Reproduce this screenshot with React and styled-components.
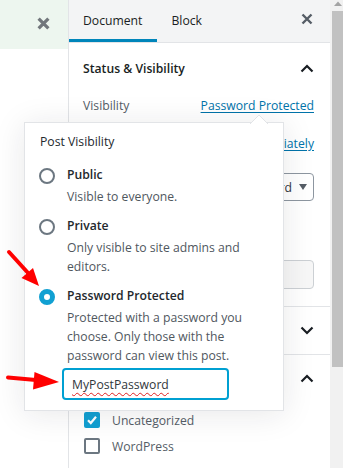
import React from "react";
import styled, { createGlobalStyle } from "styled-components";

const Global = createGlobalStyle`
  html, body { margin: 0; padding: 0; background: #fff; overflow: hidden; }
  body { font-family: "Open Sans", "Noto Sans", sans-serif; font-size: 12.2px; color: #191e23; }
  * { box-sizing: border-box; }
`;

const Page = styled.div`
  position: relative;
  display: flex;
  width: 343px;
  height: 468px;
  overflow: hidden;
`;

const LeftPane = styled.div`
  width: 68px;
  flex: none;
  display: flex;
  flex-direction: column;
`;

const GreenBar = styled.div`
  height: 49px;
  background: #edf6ef;
  display: flex;
  align-items: center;
  justify-content: flex-end;
  padding: 0 18px 2px 0;
`;

const Sidebar = styled.div`
  width: 262px;
  flex: none;
  border-left: 1px solid #e2e4e7;
  display: flex;
  flex-direction: column;
  background: #fff;
`;

const Header = styled.div`
  height: 43px;
  flex: none;
  background: #f3f4f5;
  border-bottom: 1px solid #e2e4e7;
  display: flex;
  align-items: stretch;
  padding-right: 17px;
`;

const Tab = styled.div`
  display: flex;
  align-items: center;
  padding: 0 15px 1px 14px;
  color: #191e23;
  font-size: 12.2px;
  box-shadow: ${(p) => (p.$active ? "inset 0 -3px 0 #0085ba" : "none")};
`;

const HeaderClose = styled.div`
  margin-left: auto;
  display: flex;
  align-items: center;
  padding-bottom: 4px;
`;

const Panel = styled.div`
  border-bottom: 1px solid #e2e4e7;
`;

const PanelHead = styled.div`
  height: ${(p) => p.$h}px;
  display: flex;
  align-items: center;
  justify-content: space-between;
  padding: 0 16px 0 14px;
  font-weight: 600;
  color: #191e23;
`;

const PanelBody = styled.div`
  padding: ${(p) => p.$pt || 0}px 16px ${(p) => p.$pb || 0}px 14px;
  display: flex;
  flex-direction: column;
`;

const Row = styled.div`
  height: ${(p) => p.$h || 24}px;
  margin-top: ${(p) => p.$mt || 0}px;
  display: flex;
  align-items: center;
  justify-content: space-between;
  color: #555d66;
`;

const Link = styled.a`
  color: #0073aa;
  text-decoration: underline;
  text-underline-offset: 2px;
`;

const SelectBox = styled.div`
  width: 80px;
  height: 28px;
  border: 1px solid #8d96a0;
  border-radius: 4px;
  display: flex;
  align-items: center;
  justify-content: space-between;
  padding: 0 6px 0 5px;
  color: #32373c;
`;

const Caret = styled.span`
  width: 0;
  height: 0;
  border-left: 4px solid transparent;
  border-right: 4px solid transparent;
  border-top: 6px solid #555d66;
`;

const GhostButton = styled.div`
  height: 29px;
  margin-top: ${(p) => p.$mt || 0}px;
  border: 1px solid #ccd0d4;
  border-radius: 4px;
  background: #f7f7f7;
  display: flex;
  align-items: center;
  justify-content: center;
  color: #555d66;
`;

const CheckRow = styled.div`
  height: 26px;
  margin-top: ${(p) => p.$mt || 0}px;
  display: flex;
  align-items: center;
  gap: 12px;
  padding-left: 1px;
  color: #555d66;
`;

const CheckBox = styled.span`
  width: 16px;
  height: 16px;
  flex: none;
  border-radius: 2px;
  border: ${(p) => (p.$checked ? "none" : "2px solid #6c7781")};
  background: ${(p) => (p.$checked ? "#11a0d2" : "#fff")};
  display: flex;
  align-items: center;
  justify-content: center;
`;

const Scrollbar = styled.div`
  width: 13px;
  flex: none;
  background: #f1f1f1;
  display: flex;
  flex-direction: column;
  align-items: flex-end;
`;

const ScrollUp = styled.div`
  height: 11px;
  width: 11px;
  display: flex;
  justify-content: center;
  padding-top: 1px;
`;

const Thumb = styled.div`
  width: 11px;
  height: 356px;
  background: #c1c1c1;
`;

const Popover = styled.div`
  position: absolute;
  left: 24px;
  top: 122px;
  width: 260px;
  height: 289px;
  background: #fff;
  border: 1px solid #e2e4e7;
  box-shadow: 0 3px 30px rgba(25, 30, 35, 0.1);
  padding: 9px 14px 0 14px;
  display: flex;
  flex-direction: column;
`;

const PopArrow = styled.svg`
  position: absolute;
  left: 224px;
  top: -9px;
`;

const PopTitle = styled.div`
  line-height: 20px;
  margin: 0 0 13px 1px;
  color: #23282d;
`;

const Choice = styled.div`
  display: grid;
  grid-template-columns: 16px 1fr;
  column-gap: 12px;
  margin-bottom: ${(p) => (p.$last ? 0 : 10)}px;
`;

const RadioDot = styled.span`
  width: 16px;
  height: 16px;
  margin-top: 3px;
  border-radius: 50%;
  background: #fff;
  border: ${(p) => (p.$checked ? "5px solid #11a0d2" : "2px solid #6c7781")};
`;

const ChoiceLabel = styled.div`
  font-weight: 600;
  line-height: 20px;
  color: #23282d;
`;

const ChoiceInfo = styled.div`
  grid-column: 2;
  margin-top: 2px;
  line-height: 19px;
  color: #50575e;
`;

const PasswordField = styled.div`
  margin: 3px 0 0 23px;
  width: 167px;
  height: 32px;
  border: 2px solid #00a0d2;
  border-radius: 4px;
  padding: 0 8px;
  display: flex;
  align-items: center;
  color: #32373c;
`;

const SpellMarked = styled.span`
  text-decoration: underline wavy #e02020;
  text-decoration-thickness: 1px;
  text-underline-offset: 3px;
`;

const Annotation = styled.svg`
  position: absolute;
  left: 0;
  top: 0;
  pointer-events: none;
`;

const Chevron = ({ down }) => (
  <svg width="14" height="9" viewBox="0 0 14 9">
    <path
      d={down ? "M1.5 1.5 L7 7 L12.5 1.5" : "M1.5 7.5 L7 2 L12.5 7.5"}
      fill="none"
      stroke="#191e23"
      strokeWidth="2.2"
    />
  </svg>
);

const CloseIcon = ({ size, color, w }) => (
  <svg width={size} height={size} viewBox="0 0 12 12">
    <path d="M1.5 1.5 L10.5 10.5 M10.5 1.5 L1.5 10.5" stroke={color} strokeWidth={w} fill="none" />
  </svg>
);

const choices = [
  { id: "public", label: "Public", info: ["Visible to everyone."] },
  { id: "private", label: "Private", info: ["Only visible to site admins and", "editors."] },
  {
    id: "password",
    label: "Password Protected",
    info: ["Protected with a password you", "choose. Only those with the", "password can view this post."],
    checked: true,
  },
];

export default function App() {
  return (
    <>
      <Global />
      <Page>
        <LeftPane>
          <GreenBar>
            <CloseIcon size={13} color="#72777c" w={3} />
          </GreenBar>
        </LeftPane>

        <Sidebar>
          <Header>
            <Tab $active>Document</Tab>
            <Tab>Block</Tab>
            <HeaderClose>
              <CloseIcon size={12} color="#555d66" w={2.4} />
            </HeaderClose>
          </Header>

          <Panel>
            <PanelHead $h={50}>
              <span>Status &amp; Visibility</span>
              <Chevron />
            </PanelHead>
            <PanelBody $pb={17}>
              <Row>
                <span>Visibility</span>
                <Link>Password Protected</Link>
              </Row>
              <Row $mt={14}>
                <span>Publish</span>
                <Link>Immediately</Link>
              </Row>
              <Row $mt={18} $h={28}>
                <span>Format</span>
                <SelectBox>
                  <span>Standard</span>
                  <Caret />
                </SelectBox>
              </Row>
              <CheckRow $mt={10}>
                <CheckBox />
                <span>Pending</span>
              </CheckRow>
              <GhostButton $mt={23}>Switch to Draft</GhostButton>
            </PanelBody>
          </Panel>

          <Panel>
            <PanelHead $h={47}>
              <span>Permalink</span>
              <Chevron down />
            </PanelHead>
          </Panel>

          <div>
            <PanelHead $h={47}>
              <span>Categories</span>
              <Chevron />
            </PanelHead>
            <PanelBody $pt={5}>
              <CheckRow>
                <CheckBox $checked>
                  <svg width="12" height="12" viewBox="0 0 12 12">
                    <path d="M2 6.2 L4.8 9 L10 2.8" fill="none" stroke="#fff" strokeWidth="2.2" />
                  </svg>
                </CheckBox>
                <span>Uncategorized</span>
              </CheckRow>
              <CheckRow>
                <CheckBox />
                <span>WordPress</span>
              </CheckRow>
            </PanelBody>
          </div>
        </Sidebar>

        <Scrollbar>
          <ScrollUp>
            <svg width="8" height="5" viewBox="0 0 8 5">
              <path d="M0 5 L4 0.5 L8 5 Z" fill="#a3a3a3" />
            </svg>
          </ScrollUp>
          <Thumb />
        </Scrollbar>

        <Popover>
          <PopArrow width="20" height="10" viewBox="0 0 20 10">
            <path d="M1 10 L10 1 L19 10" fill="#fff" stroke="#e2e4e7" strokeWidth="1" />
          </PopArrow>
          <PopTitle>Post Visibility</PopTitle>
          {choices.map((c, i) => (
            <Choice key={c.id} $last={i === choices.length - 1}>
              <RadioDot $checked={c.checked} />
              <ChoiceLabel>{c.label}</ChoiceLabel>
              <ChoiceInfo>
                {c.info.map((l) => (
                  <div key={l}>{l}</div>
                ))}
              </ChoiceInfo>
            </Choice>
          ))}
          <PasswordField role="textbox">
            <SpellMarked>MyPostPassword</SpellMarked>
          </PasswordField>
        </Popover>

        <Annotation width="343" height="468" viewBox="0 0 343 468">
          <path d="M9 252 L29 274" stroke="#f00" strokeWidth="4" strokeLinecap="round" />
          <path d="M39 286 L21.5 278 L33 268 Z" fill="#f00" />
          <path d="M8 377.5 L36 380" stroke="#f00" strokeWidth="4" strokeLinecap="round" />
          <path d="M59 382 L33 389.5 L34.5 372 Z" fill="#f00" />
        </Annotation>
      </Page>
    </>
  );
}
